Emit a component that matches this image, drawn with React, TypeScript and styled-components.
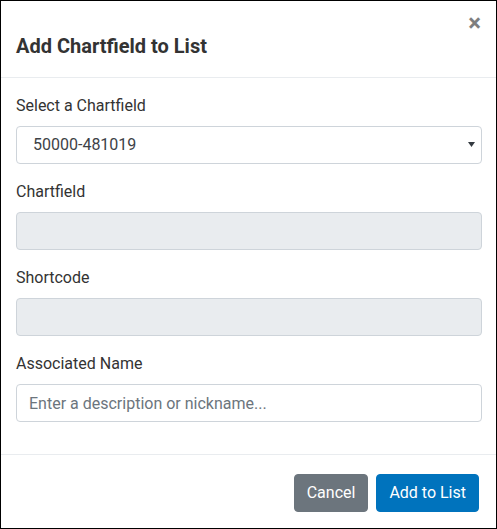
import React from 'react';
import styled, { createGlobalStyle } from 'styled-components';

const GlobalStyle = createGlobalStyle`
    html, body {
        margin: 0;
        padding: 0;
        background: #fff;
    }
    * {
        box-sizing: border-box;
    }
`;

const fields = [
    { label: 'Chartfield', value: '' },
    { label: 'Shortcode', value: '' },
];

const App: React.FC = () => {
    return (
        <>
            <GlobalStyle />
            <Modal>
                <Header>
                    <Title>Add Chartfield to List</Title>
                    <CloseButton aria-label="Close">×</CloseButton>
                </Header>
                <Body>
                    <Group>
                        <Label>Select a Chartfield</Label>
                        <SelectWrap>
                            <Select defaultValue="50000-481019">
                                <option value="50000-481019">50000-481019</option>
                            </Select>
                            <Caret width="7" height="5" viewBox="0 0 7 5">
                                <path d="M0 0 L7 0 L3.5 5 Z" fill="#343a40" />
                            </Caret>
                        </SelectWrap>
                    </Group>
                    {fields.map((f) => (
                        <Group key={f.label}>
                            <Label>{f.label}</Label>
                            <Input type="text" disabled value={f.value} readOnly />
                        </Group>
                    ))}
                    <Group>
                        <Label>Associated Name</Label>
                        <Input type="text" placeholder="Enter a description or nickname..." />
                    </Group>
                </Body>
                <Footer>
                    <Button variant="secondary">Cancel</Button>
                    <Button variant="primary">Add to List</Button>
                </Footer>
            </Modal>
        </>
    );
};

export default App;

const Modal = styled.div`
    width: 497px;
    height: 529px;
    border: 1px solid #000;
    background: #fff;
    display: flex;
    flex-direction: column;
    font-family: Roboto, "Liberation Sans", Arial, sans-serif;
    color: #333;
`;

const Header = styled.div`
    display: flex;
    align-items: flex-start;
    justify-content: space-between;
    padding: 16px 15px 16px 15px;
    border-bottom: 1px solid #e9ecef;
`;

const Title = styled.h5`
    margin: 14px 0 0 0;
    font-size: 20px;
    font-weight: 700;
    line-height: 30px;
    color: #333;
`;

const CloseButton = styled.button`
    background: none;
    border: none;
    padding: 0;
    margin: -6px 0 0 0;
    font-family: Roboto, "Liberation Sans", Arial, sans-serif;
    font-size: 24px;
    font-weight: 700;
    line-height: 1;
    color: #000;
    opacity: 0.5;
    cursor: pointer;
`;

const Body = styled.div`
    padding: 16px 14px 0 15px;
    flex: 1;
`;

const Group = styled.div`
    margin-bottom: 16px;
`;

const Label = styled.label`
    display: block;
    font-size: 16px;
    line-height: 24px;
    margin-bottom: 8px;
    color: #333;
`;

const SelectWrap = styled.div`
    position: relative;
`;

const Select = styled.select`
    display: block;
    width: 100%;
    height: 38px;
    padding: 6px 28px 6px 16px;
    font-family: inherit;
    font-size: 16px;
    line-height: 24px;
    color: #3d4247;
    background: #fff;
    border: 1px solid #ced4da;
    border-radius: 4px;
    appearance: none;
    -webkit-appearance: none;
    outline: none;
`;

const Caret = styled.svg`
    position: absolute;
    right: 7px;
    top: 16px;
    pointer-events: none;
`;

const Input = styled.input`
    display: block;
    width: 100%;
    height: 38px;
    padding: 6px 12px;
    font-family: inherit;
    font-size: 16px;
    line-height: 24px;
    color: #495057;
    background: #fff;
    border: 1px solid #ced4da;
    border-radius: 4px;
    outline: none;

    &:disabled {
        background: #e9ecef;
    }

    &::placeholder {
        color: #6c757d;
    }
`;

const Footer = styled.div`
    display: flex;
    justify-content: flex-end;
    gap: 8px;
    padding: 19px 17px 16px 16px;
    border-top: 1px solid #e9ecef;
`;

const Button = styled.button<{ variant: 'primary' | 'secondary' }>`
    height: 38px;
    padding: 6px 12px;
    font-family: inherit;
    font-size: 16px;
    line-height: 24px;
    color: #fff;
    border: 1px solid ${(p) => (p.variant === 'primary' ? '#0073bd' : '#6c757d')};
    background: ${(p) => (p.variant === 'primary' ? '#0073bd' : '#6c757d')};
    border-radius: 4px;
    cursor: pointer;
`;
